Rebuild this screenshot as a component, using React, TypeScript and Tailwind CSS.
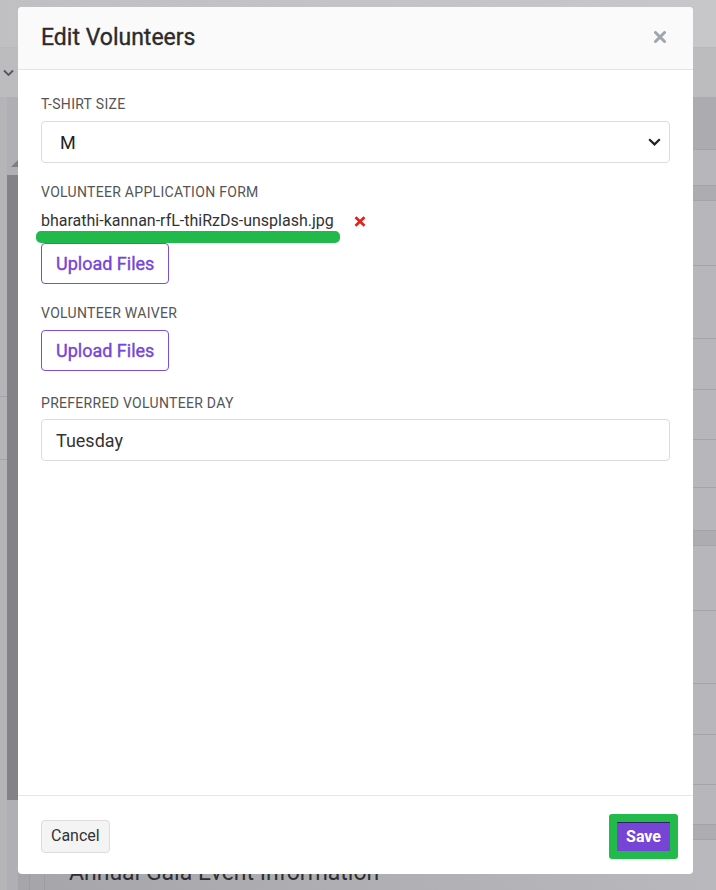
import React from "react";

const rows: { h: number; bg: string }[] = [
  { h: 53, bg: "bg-[#acacb0]" },
  { h: 36, bg: "bg-[#b7b7bb]" },
  { h: 15, bg: "bg-[#adadb1]" },
  { h: 65, bg: "bg-[#b7b7bb]" },
  { h: 73, bg: "bg-[#b7b7bb]" },
  { h: 51, bg: "bg-[#b7b7bb]" },
  { h: 50, bg: "bg-[#b7b7bb]" },
  { h: 48, bg: "bg-[#b7b7bb]" },
  { h: 43, bg: "bg-[#b7b7bb]" },
  { h: 15, bg: "bg-[#adadb1]" },
  { h: 65, bg: "bg-[#b7b7bb]" },
  { h: 73, bg: "bg-[#b7b7bb]" },
  { h: 51, bg: "bg-[#b7b7bb]" },
  { h: 50, bg: "bg-[#b7b7bb]" },
  { h: 40, bg: "bg-[#b7b7bb]" },
  { h: 15, bg: "bg-[#adadb1]" },
];

function Label({ children }: { children: React.ReactNode }) {
  return (
    <div className="text-[14px] leading-[16px] tracking-[0.3px] text-[#555555] uppercase">
      {children}
    </div>
  );
}

function UploadButton() {
  return (
    <button className="h-[41px] px-[14px] border border-[#7b4fd9] rounded-[4px] text-[18px] font-normal [-webkit-text-stroke:0.4px_#7646d8] text-[#7646d8] bg-white leading-none">
      Upload Files
    </button>
  );
}

export default function App() {
  return (
    <div className="relative w-[716px] h-[890px] overflow-hidden bg-[#b3b3b7] font-['Roboto',sans-serif]">
      {/* dimmed page behind the modal */}
      <div className="flex flex-col h-full">
        <div className="h-[48px] bg-gradient-to-r from-[#c0c0c2] to-[#c7c7c9] border-b border-[#b9b9bb]" />
        <div className="h-[49px] bg-[#bcbcbe] flex items-center pl-[3px]">
          <svg width="11" height="8" viewBox="0 0 11 8" className="mt-[1px]">
            <polyline points="1,1.5 5.5,6 10,1.5" fill="none" stroke="#55565c" strokeWidth="1.8" />
          </svg>
        </div>
        <div className="flex flex-1">
          <div className="w-[7px] flex flex-col bg-[#b5b5b8]">
            <div className="h-[300px] border-b border-[#a6a6aa]" />
            <div className="h-[63px] border-b border-[#a6a6aa]" />
          </div>
          <div className="w-[11px] flex flex-col items-end bg-[#b0b0b4]">
            <div className="h-[63px]" />
            <svg width="7" height="7" viewBox="0 0 7 7">
              <polygon points="0,7 7,0 7,7" fill="#7d7d82" />
            </svg>
            <div className="w-[11px] h-[8px]" />
            <div className="w-[11px] h-[625px] bg-[#828287]" />
          </div>
          <div className="flex-1 flex flex-col">
            {rows.map((r, i) => (
              <div key={i} style={{ height: r.h }} className={`${r.bg} border-b border-[#a4a4a8]`} />
            ))}
            <div className="flex-1 bg-gradient-to-r from-[#a6a6aa] to-[#b9b9bd] flex">
              <div className="w-[12px] border-r border-[#9d9da1]" />
              <div className="w-[15px] border-r border-[#9d9da1]" />
              <div className="pl-[24px] pt-[19px] text-[23px] leading-[28px] text-[#2f2f33] whitespace-nowrap">
                Annual Gala Event Information
              </div>
            </div>
          </div>
        </div>
      </div>

      {/* modal */}
      <div className="absolute left-[18px] top-[7px] w-[675px] h-[867px] bg-white rounded-[4px] flex flex-col overflow-hidden">
        <div className="h-[63px] shrink-0 bg-[#fafafa] border-b border-[#e4e4e4] flex items-center justify-between pl-[23px] pr-[27px] pb-[2px]">
          <div className="text-[23px] font-normal [-webkit-text-stroke:0.35px_#2b2b2b] text-[#2b2b2b] leading-none">
            Edit Volunteers
          </div>
          <svg width="12" height="12" viewBox="0 0 12 12">
            <path d="M1.5 1.5 L10.5 10.5 M10.5 1.5 L1.5 10.5" stroke="#9ea6ae" strokeWidth="3" strokeLinecap="round" />
          </svg>
        </div>

        <div className="flex-1 px-[23px] pt-[26px] flex flex-col items-start">
          <Label>T-Shirt Size</Label>
          <div className="mt-[9px] w-full h-[42px] border border-[#dcdcdc] rounded-[4px] flex items-center justify-between pl-[18px] pr-[8px]">
            <span className="text-[18px] text-[#222222]">M</span>
            <svg width="13" height="8" viewBox="0 0 13 8">
              <polyline points="1.2,1.2 6.5,6.4 11.8,1.2" fill="none" stroke="#222222" strokeWidth="2.2" />
            </svg>
          </div>

          <div className="mt-[21px]">
            <Label>Volunteer Application Form</Label>
          </div>
          <div className="relative mt-[11px] h-[20px] flex items-center">
            <span className="text-[16px] leading-[20px] text-[#333333] whitespace-nowrap">
              bharathi-kannan-rfL-thiRzDs-unsplash.jpg
            </span>
            <svg width="12" height="11" viewBox="0 0 12 11" className="ml-[20px] mt-[1px]">
              <path d="M1.5 1.2 L10.5 9.8 M10.5 1.2 L1.5 9.8" stroke="#e3211c" strokeWidth="2.6" />
            </svg>
            <div className="absolute left-[-5px] top-[20px] w-[304px] h-[12px] rounded-[5px] bg-[#21b94a]" />
          </div>
          <div className="mt-[12px]">
            <UploadButton />
          </div>

          <div className="mt-[21px]">
            <Label>Volunteer Waiver</Label>
          </div>
          <div className="mt-[9px]">
            <UploadButton />
          </div>

          <div className="mt-[24px]">
            <Label>Preferred Volunteer Day</Label>
          </div>
          <div className="mt-[8px] w-full h-[42px] border border-[#dcdcdc] rounded-[4px] flex items-center pl-[14px]">
            <span className="text-[18px] text-[#333333]">Tuesday</span>
          </div>
        </div>

        <div className="h-[79px] shrink-0 border-t border-[#e6e6e6] flex items-center justify-between pl-[23px] pr-[23px] pt-[2px]">
          <button className="h-[33px] px-[9px] bg-[#f4f4f4] border border-[#dcdcdc] rounded-[4px] text-[16px] text-[#333333] leading-none">
            Cancel
          </button>
          <div className="-m-[8px] p-[8px] bg-[#21ba4b] rounded-[3px] flex">
            <button className="h-[29px] px-[9px] bg-[#7645d6] border-t border-[#2e2566] text-[16px] font-bold text-white leading-none">
              Save
            </button>
          </div>
        </div>
      </div>
    </div>
  );
}
